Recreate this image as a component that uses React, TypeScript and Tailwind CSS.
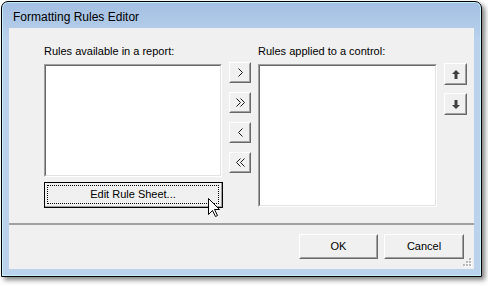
import React from 'react';

const FONT = { fontFamily: '"Liberation Sans", Arial, sans-serif' };

// classic raised 3D button
function RaisedButton({ className = '', children }: { className?: string; children?: React.ReactNode }) {
  return (
    <div className={`flex border border-t-white border-l-white border-b-[#696969] border-r-[#696969] ${className}`}>
      <div className="flex flex-1 items-center justify-center border border-t-[#f0f0f0] border-l-[#f0f0f0] border-b-[#a0a0a0] border-r-[#a0a0a0] bg-[#f0f0f0] text-[11px] text-black">
        {children}
      </div>
    </div>
  );
}

function ListBox({ className = '' }: { className?: string }) {
  return (
    <div className={`flex border border-t-[#a0a0a0] border-l-[#a0a0a0] border-b-white border-r-white ${className}`}>
      <div className="flex-1 border border-t-[#696969] border-l-[#696969] border-b-[#e3e3e3] border-r-[#e3e3e3] bg-white" />
    </div>
  );
}

function Chevron({ dir, double }: { dir: 'left' | 'right'; double?: boolean }) {
  const one = dir === 'right' ? 'M1.5 0.5 L5.5 4.5 L1.5 8.5' : 'M5.5 0.5 L1.5 4.5 L5.5 8.5';
  const two = dir === 'right' ? 'M5.5 0.5 L9.5 4.5 L5.5 8.5' : 'M9.5 0.5 L5.5 4.5 L9.5 8.5';
  return (
    <svg width={double ? 11 : 7} height={9} viewBox={`0 0 ${double ? 11 : 7} 9`} fill="none" stroke="#1a1a1a" strokeWidth="1">
      <path d={one} />
      {double && <path d={two} />}
    </svg>
  );
}

function VArrow({ up }: { up?: boolean }) {
  return (
    <svg width="8" height="9" viewBox="0 0 8 9" fill="#404040">
      {up ? <path d="M4 0 L8 4 L5.5 4 L5.5 9 L2.5 9 L2.5 4 L0 4 Z" /> : <path d="M2.5 0 L5.5 0 L5.5 5 L8 5 L4 9 L0 5 L2.5 5 Z" />}
    </svg>
  );
}

export default function App() {
  return (
    <div className="relative w-[488px] h-[286px] overflow-hidden bg-white" style={FONT}>
      {/* window frame */}
      <div className="ml-px mt-px flex h-[276px] w-[481px] flex-col rounded-t-[7px] border border-black bg-[linear-gradient(to_bottom,#a3bfe2_0px,#bad2ec_40px,#bad2ec_100%)] shadow-[inset_0_0_0_1px_rgba(200,245,255,0.85),3px_3px_5px_rgba(0,0,0,0.5)]">
        <div className="h-[26px] pl-[11px] pt-[8px] text-[12px] leading-[15px] text-black">Formatting Rules Editor</div>

        <div className="px-[7px]">
          <div className="relative flex h-[241px] flex-col bg-[#f0f0f0] text-[11px] text-black">
            <div className="flex items-start pl-[35px] pt-[17px]">
              {/* available rules */}
              <div className="flex w-[179px] flex-col">
                <div className="h-[13px] leading-[13px]">Rules available in a report:</div>
                <ListBox className="mt-[6px] h-[113px] w-[178px]" />
                <div className="mt-[5px] flex h-[26px] w-[179px] border border-black">
                  <div className="flex flex-1 p-[1px] border-b border-r border-b-[#a0a0a0] border-r-[#a0a0a0] bg-[#f0f0f0]">
                    <div className="m-[1px] flex flex-1 items-center justify-center border border-dotted border-black">
                      Edit Rule Sheet...
                    </div>
                  </div>
                </div>
              </div>

              {/* move buttons */}
              <div className="ml-[6px] mt-[17px] flex flex-col gap-[9px]">
                <RaisedButton className="h-[21px] w-[22px]"><Chevron dir="right" /></RaisedButton>
                <RaisedButton className="h-[21px] w-[22px]"><Chevron dir="right" double /></RaisedButton>
                <RaisedButton className="h-[21px] w-[22px]"><Chevron dir="left" /></RaisedButton>
                <RaisedButton className="h-[21px] w-[22px]"><Chevron dir="left" double /></RaisedButton>
              </div>

              {/* applied rules */}
              <div className="ml-[7px] flex w-[179px] flex-col">
                <div className="h-[13px] leading-[13px]">Rules applied to a control:</div>
                <ListBox className="mt-[6px] h-[143px] w-[179px]" />
              </div>

              {/* order buttons */}
              <div className="ml-[7px] mt-[18px] flex flex-col gap-[8px]">
                <RaisedButton className="h-[22px] w-[23px]"><VArrow up /></RaisedButton>
                <RaisedButton className="h-[22px] w-[23px]"><VArrow /></RaisedButton>
              </div>
            </div>

            <div className="mt-[15px] h-[2px] bg-[#a0a0a0]" />

            <div className="mt-[9px] flex justify-end gap-[6px] pr-[10px]">
              <RaisedButton className="h-[25px] w-[79px]">OK</RaisedButton>
              <RaisedButton className="h-[25px] w-[80px]">Cancel</RaisedButton>
            </div>

            {/* size grip */}
            <svg className="absolute bottom-[2px] right-[2px]" width="9" height="9" viewBox="0 0 9 9">
              {[
                [6, 0],
                [3, 3],
                [6, 3],
                [0, 6],
                [3, 6],
                [6, 6],
              ].map(([x, y], i) => (
                <g key={i}>
                  <rect x={x + 1} y={y + 1} width="2" height="2" fill="#ffffff" />
                  <rect x={x} y={y} width="2" height="2" fill="#b8b8b8" />
                </g>
              ))}
            </svg>
          </div>
        </div>
      </div>

      {/* mouse pointer */}
      <svg className="absolute left-[208px] top-[198px]" width="13" height="20" viewBox="0 0 13 20">
        <path d="M0.5 0.5 L0.5 16.5 L4.5 12.5 L7.5 18.5 L9.5 17.5 L6.5 11.5 L11.5 11.5 Z" fill="#ffffff" stroke="#000000" strokeWidth="1" strokeLinejoin="miter" />
      </svg>
    </div>
  );
}
